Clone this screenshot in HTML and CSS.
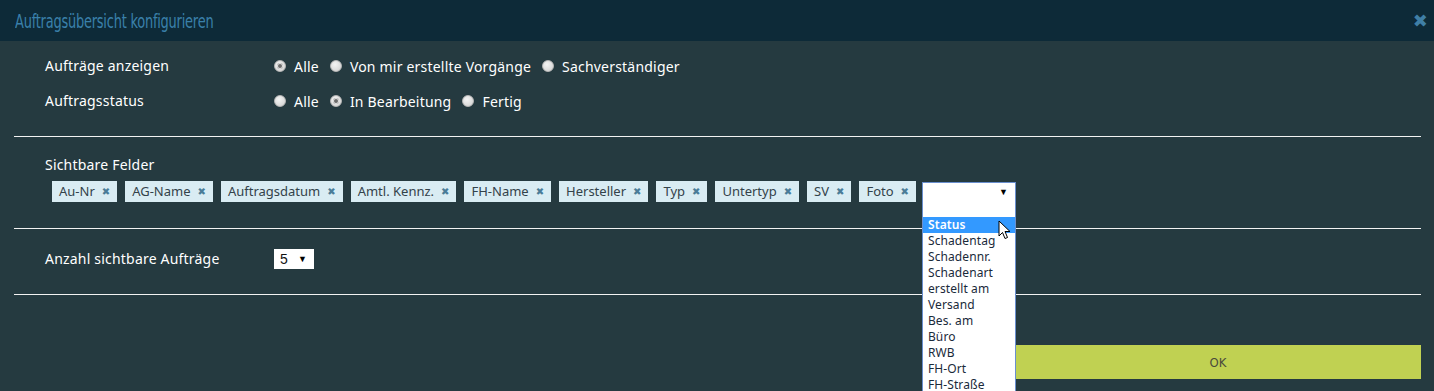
FILE: index.html
```html
<!DOCTYPE html>
<html lang="de">
<head>
<meta charset="utf-8">
<title>Auftragsübersicht konfigurieren</title>
<link rel="stylesheet" href="styles.css">
</head>
<body>
<div class="dialog">
  <div class="header">
    <span class="title">Auftragsübersicht konfigurieren</span>
    <span class="close">✖</span>
  </div>
  <div class="content">
    <div class="section s1">
      <div class="row">
        <div class="label">Aufträge anzeigen</div>
        <div class="options">
          <span class="radio checked"></span><span class="opt">Alle</span>
          <span class="radio"></span><span class="opt">Von mir erstellte Vorgänge</span>
          <span class="radio"></span><span class="opt">Sachverständiger</span>
        </div>
      </div>
      <div class="row">
        <div class="label">Auftragsstatus</div>
        <div class="options">
          <span class="radio"></span><span class="opt">Alle</span>
          <span class="radio checked"></span><span class="opt">In Bearbeitung</span>
          <span class="radio"></span><span class="opt">Fertig</span>
        </div>
      </div>
    </div>
    <div class="rule"></div>
    <div class="section s2">
      <div class="label">Sichtbare Felder</div>
      <div class="tags">
        <span class="tag">Au-Nr<span class="x">✖</span></span>
        <span class="tag">AG-Name<span class="x">✖</span></span>
        <span class="tag">Auftragsdatum<span class="x">✖</span></span>
        <span class="tag">Amtl. Kennz.<span class="x">✖</span></span>
        <span class="tag">FH-Name<span class="x">✖</span></span>
        <span class="tag">Hersteller<span class="x">✖</span></span>
        <span class="tag">Typ<span class="x">✖</span></span>
        <span class="tag">Untertyp<span class="x">✖</span></span>
        <span class="tag">SV<span class="x">✖</span></span>
        <span class="tag">Foto<span class="x">✖</span></span>
        <div class="picker">
          <div class="select open"><span class="val"></span><span class="arrow">▼</span></div>
          <ul class="list">
            <li class="empty">&nbsp;</li>
            <li class="hl">Status</li>
            <li>Schadentag</li>
            <li>Schadennr.</li>
            <li>Schadenart</li>
            <li>erstellt am</li>
            <li>Versand</li>
            <li>Bes. am</li>
            <li>Büro</li>
            <li>RWB</li>
            <li>FH-Ort</li>
            <li>FH-Straße</li>
          </ul>
          <svg class="cursor" width="13" height="20" viewBox="0 0 13 20"><path d="M1 1 L1 16 L4.5 12.5 L7 18.5 L9.5 17.5 L7 11.5 L12 11.5 Z" fill="#fff" stroke="#000" stroke-width="1" stroke-linejoin="round"/></svg>
        </div>
      </div>
    </div>
    <div class="rule"></div>
    <div class="section s3">
      <div class="row">
        <div class="label">Anzahl sichtbare Aufträge</div>
        <div class="select small"><span class="val">5</span><span class="arrow">▼</span></div>
      </div>
    </div>
    <div class="rule"></div>
    <div class="footer">
      <div class="ok">OK</div>
    </div>
  </div>
</div>
</body>
</html>
```
FILE: styles.css
```css
* { box-sizing: border-box; }
html, body { margin: 0; padding: 0; }
body {
  background: #253a40;
  font-family: "Noto Sans", "Open Sans", sans-serif;
  font-size: 14px;
  letter-spacing: 0.2px;
  color: #fff;
  width: 1434px;
  height: 391px;
  overflow: hidden;
}
.dialog { width: 1434px; }
.header {
  height: 41px;
  background: #0d2a38;
  display: flex;
  align-items: center;
  justify-content: space-between;
  padding: 0 6px 0 15px;
}
.title {
  font-family: "DejaVu Sans Condensed", "DejaVu Sans", sans-serif;
  font-stretch: condensed;
  font-size: 20px;
  color: #3a80aa;
  letter-spacing: -0.3px;
  transform: scaleX(0.72);
  transform-origin: left center;
  white-space: nowrap;
}
.close {
  color: #3f7fa6;
  font-size: 18px;
  font-family: "DejaVu Sans", sans-serif;
  font-weight: bold;
}
.content { padding: 0 13px 0 14px; }
.rule { height: 1px; background: #f2f2f2; }
.section { padding-left: 31px; }
.row { display: flex; align-items: center; height: 20px; }
.label { width: 229px; flex: none; line-height: 20px; }
.options { display: flex; align-items: center; }
.s1 { padding-top: 15px; padding-bottom: 25px; display: flex; flex-direction: column; gap: 15px; }
.radio {
  width: 12px; height: 12px; border-radius: 50%;
  background: radial-gradient(circle at 40% 35%, #f4f4f4, #cfcfcf);
  border: 1px solid #b8b8b8;
  margin-right: 8px;
  position: relative;
  flex: none;
}
.radio.checked::after {
  content: "";
  position: absolute;
  left: 2px; top: 2px;
  width: 6px; height: 6px; border-radius: 50%;
  background: #6b6b6b;
  box-shadow: 0 0 0 1px #e0e0e0 inset;
}
.opt { margin-right: 11px; }
.s2 { padding-top: 18px; padding-bottom: 26px; }
.s2 .label { line-height: 20px; }
.tags { display: flex; align-items: center; gap: 8px; margin-top: 6px; padding-left: 7px; height: 21px; }
.tag {
  background: #d9ecf3;
  color: #33424a;
  font-size: 13px;
  letter-spacing: 0;
  height: 21px;
  line-height: 21px;
  padding: 0 7px;
  display: inline-flex;
  align-items: center;
  white-space: nowrap;
}
.tag .x {
  color: #4a7c98;
  font-family: "DejaVu Sans", sans-serif;
  font-size: 10px;
  margin-left: 7px;
}
.picker { position: relative; margin-left: -2px; }
.select {
  background: #fff;
  color: #111;
  display: flex;
  align-items: center;
  justify-content: space-between;
  font-family: "Liberation Sans", Arial, sans-serif;
  letter-spacing: 0;
}
.select .arrow { font-size: 9px; color: #000; }
.select.open {
  width: 94px; height: 20px;
  border: 1px solid #6a8fcf;
  padding: 0 7px 0 4px;
}
.list {
  position: absolute;
  left: 0; top: 19px;
  margin: 0; padding: 0;
  list-style: none;
  width: 94px;
  background: #fff;
  border: 1px solid #6a8fcf;
  border-top: none;
  font-family: "Noto Sans", "Open Sans", sans-serif;
  font-size: 12px;
  letter-spacing: 0.1px;
  z-index: 5;
}
.list li {
  height: 16px;
  line-height: 16px;
  padding-left: 5px;
  color: #1a2a3a;
  white-space: nowrap;
  overflow: hidden;
}
.list li.hl { background: #3399ff; color: #fff; font-weight: 600; }
.cursor { position: absolute; left: 76px; top: 38px; z-index: 6; }
.s3 { padding-top: 20px; padding-bottom: 25px; }
.select.small {
  width: 40px; height: 20px;
  padding: 0 7px 0 6px;
  font-size: 14px;
}
.footer { display: flex; justify-content: flex-end; padding-top: 50px; }
.ok {
  width: 406px; height: 34px;
  background: #c0d152;
  color: #4a4a3c;
  display: flex; align-items: center; justify-content: center;
  font-family: "DejaVu Sans Condensed", "DejaVu Sans", sans-serif;
  font-stretch: condensed;
  font-size: 13px;
  letter-spacing: 0;
}
```
